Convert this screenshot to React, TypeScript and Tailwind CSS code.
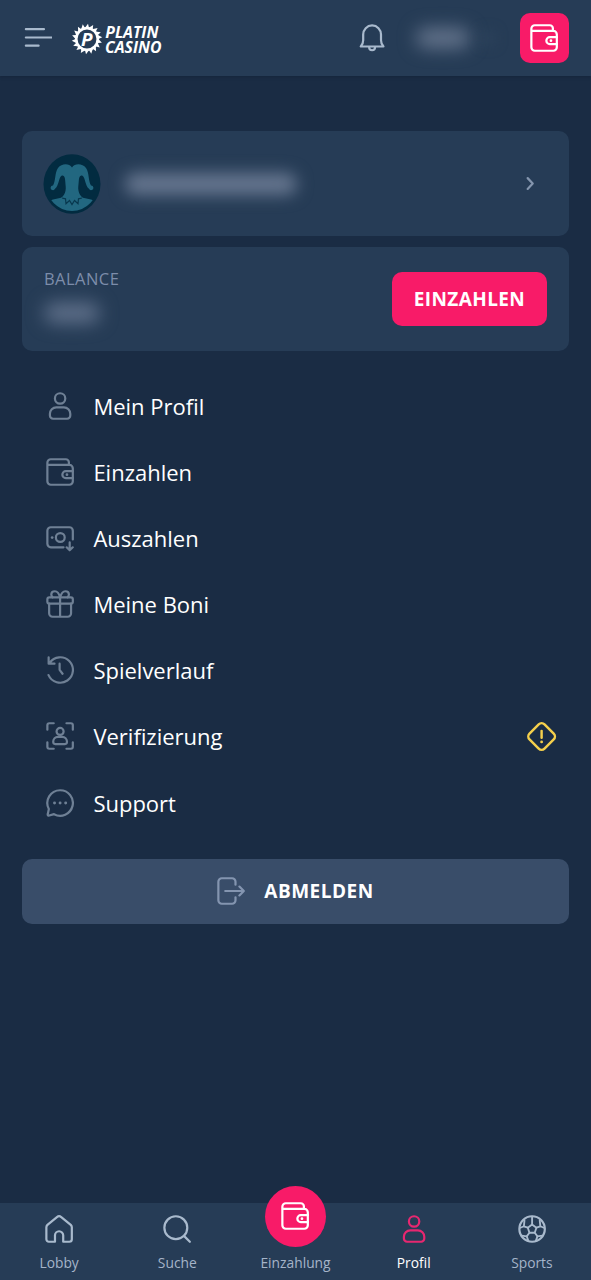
import type { ReactNode } from 'react';
import clsx from 'clsx';

type IconProps = { className?: string };

// Shared wrapper, all icons are drawn on the same 28px grid
function Icon({ className, children }: { className?: string; children: ReactNode }) {
  return (
    <svg
      viewBox="-0.4 -0.3 28.6 28.6"
      fill="none"
      stroke="currentColor"
      strokeWidth="2.25"
      strokeLinecap="round"
      strokeLinejoin="round"
      className={clsx('shrink-0', className)}
    >
      {children}
    </svg>
  );
}

const MenuIcon = ({ className }: IconProps) => (
  <Icon className={className}>
    <path d="M1.5 5H20M1.5 13.5h26M1.5 21.800h13" />
  </Icon>
);

const BellIcon = ({ className }: IconProps) => (
  <Icon className={className}>
    <path d="M2.4 22.7h23.2c-1.6-1.8-2.5-3.6-2.5-6.5v-5.7C23.1 5.4 19.2 1.2 14 1.2S4.900 5.4 4.900 10.5v5.7c0 2.900-.9 4.7-2.500 6.5Z" />
    <path d="M11 23.5a3 3 0 0 0 6 0" />
  </Icon>
);

const WalletIcon = ({ className }: IconProps) => (
  <Icon className={className}>
    <path d="M1 6.8h22.5a3.5 3.5 0 0 1 3.5 3.5v13.2a3.5 3.5 0 0 1-3.5 3.5h-19A3.5 3.5 0 0 1 1 23.5v-19A3.5 3.5 0 0 1 4.5 1h15.300a3.200 3.200 0 0 1 3.200 3.200v2.600" />
    <path d="M27 13.200h-7.200a3.500 3.500 0 0 0 0 7H27" />
    <circle cx="21" cy="16.7" r="1.4" fill="currentColor" stroke="none" />
  </Icon>
);

const UserIcon = ({ className }: IconProps) => (
  <Icon className={className}>
    <circle cx="14" cy="6.3" r="5.3" />
    <path d="M3.6 22a6.5 6.5 0 0 1 6.5-6.5h7.8a6.5 6.5 0 0 1 6.5 6.5v1.8a3.2 3.2 0 0 1-3.2 3.2H6.8a3.2 3.2 0 0 1-3.2-3.2Z" />
  </Icon>
);

const WithdrawIcon = ({ className }: IconProps) => (
  <Icon className={className}>
    <path d="M17.5 23.5h-13A3.5 3.5 0 0 1 1 20V6.5A3.5 3.5 0 0 1 4.5 3h19A3.5 3.5 0 0 1 27 6.5v9M23.8 18.5v8M20.7 23.5l3.1 3 3.1-3" />
    <circle cx="14.2" cy="13.5" r="4.5" />
    <circle cx="5.9" cy="13.5" r="1.4" fill="currentColor" stroke="none" />
  </Icon>
);

const GiftIcon = ({ className }: IconProps) => (
  <Icon className={className}>
    <rect x="1" y="7.2" width="26" height="6.5" rx="2" />
    <path d="M2.8 13.7v9.8A3.5 3.5 0 0 0 6.3 27h15.4a3.5 3.5 0 0 0 3.5-3.5v-9.8M14 7.2V27" />
    <path d="M14 7.2C12.8 3 11 1 8.7 1 6.5 1 5 2.4 5 4.4c0 1.2.5 2.1 1.4 2.8M14 7.2C15.2 3 17 1 19.3 1 21.5 1 23 2.4 23 4.4c0 1.2-.5 2.1-1.4 2.8" />
  </Icon>
);

const HistoryIcon = ({ className }: IconProps) => (
  <Icon className={className}>
    <path d="M2.2 19.2A13 13 0 1 0 3.4 6.6M2.3 1.2v6.3h6M13.5 7.5v6.3l3 4" />
  </Icon>
);

const VerifyIcon = ({ className }: IconProps) => (
  <Icon className={className}>
    <path d="M1 7.5V3a2 2 0 0 1 2-2h4.5M20.5 1H25a2 2 0 0 1 2 2v4.5M27 20.5V25a2 2 0 0 1-2 2h-4.5M7.5 27H3a2 2 0 0 1-2-2v-4.5" />
    <circle cx="14" cy="9.3" r="3.6" />
    <path d="M7 19.7a4.8 4.8 0 0 1 4.8-4.8h4.4a4.8 4.8 0 0 1 4.8 4.8v.5a2 2 0 0 1-2 2H9a2 2 0 0 1-2-2Z" />
  </Icon>
);

const SupportIcon = ({ className }: IconProps) => (
  <Icon className={className}>
    <path d="M14 1a13 13 0 1 1-6.2 24.4l-4.9 1.4c-1 .3-1.8-.3-1.5-1.4l1.1-5.3A13 13 0 0 1 14 1Z" />
    <g fill="currentColor" stroke="none">
      <circle cx="8.3" cy="14" r="1.5" />
      <circle cx="14" cy="14" r="1.5" />
      <circle cx="19.7" cy="14" r="1.5" />
    </g>
  </Icon>
);

const LogoutIcon = ({ className }: IconProps) => (
  <Icon className={className}>
    <path d="M18.5 7.5v-3A3.5 3.5 0 0 0 15 1H4.5A3.5 3.5 0 0 0 1 4.5v19A3.5 3.5 0 0 0 4.5 27H15a3.5 3.5 0 0 0 3.5-3.5v-3M8 14h19M22.5 9.5 27 14l-4.5 4.5" />
  </Icon>
);

const WarningIcon = ({ className }: IconProps) => (
  <Icon className={className}>
    <rect x="4.2" y="4.2" width="19.6" height="19.6" rx="3.8" transform="rotate(45 14 14)" />
    <path d="M14 8.8v6.3" />
    <circle cx="14" cy="19" r="1.3" fill="currentColor" stroke="none" />
  </Icon>
);

const HomeIcon = ({ className }: IconProps) => (
  <Icon className={className}>
    <path d="M18.2 27v-6.5a4.2 4.2 0 0 0-8.4 0V27H3.5A2.5 2.5 0 0 1 1 24.5V12.3c0-1 .4-1.8 1.1-2.5l9.7-8a3.5 3.5 0 0 1 4.4 0l9.7 8c.7.7 1.1 1.5 1.1 2.5v12.2a2.5 2.5 0 0 1-2.5 2.5Z" />
  </Icon>
);

const SearchIcon = ({ className }: IconProps) => (
  <Icon className={className}>
    <circle cx="12.7" cy="12.7" r="11.7" />
    <path d="m21 21 6 6" />
  </Icon>
);

const SportsIcon = ({ className }: IconProps) => (
  <Icon className={className}>
    <circle cx="14" cy="14" r="13" />
    <g strokeWidth="1.9">
      <path d="m14 9.5 4.4 3.2-1.7 5.1h-5.4l-1.7-5.1Z" />
      <path d="M14 9.5v-8M18.4 12.7l4-1.5M16.7 17.8l2.8 3.7M11.3 17.8l-2.8 3.7M9.6 12.7l-4-1.5" />
      <path d="M22.4 11.2 26.5 13M22.4 11.2l-.6-6M5.6 11.2 1.5 13M5.6 11.2l.6-6M19.5 21.5l-1.7 4.6M19.5 21.5l5-.7M8.5 21.5l1.7 4.6M8.5 21.5l-5-.7" />
    </g>
  </Icon>
);

// 18 teeth around the gear ring
const teeth = Array.from({ length: 18 }, (_, i) => i * 20);

function Logo() {
  return (
    <svg viewBox="0 0 92 42" className="h-[42px] w-[92px] text-white" fill="currentColor">
      <circle cx="16" cy="22" r="10.7" fill="none" stroke="currentColor" strokeWidth="2.5" />
      {teeth.map((deg) => (
        <path key={deg} d="M13.6 11.2 17 6.7l1.100 4.5Z" transform={`rotate(${deg} 16 22)`} />
      ))}
      <text x="10" y="28.5" fontFamily="Open Sans, sans-serif" fontWeight="700" fontStyle="italic" fontSize="18" textLength="11.5" lengthAdjust="spacingAndGlyphs">P</text>
      <g fontFamily="Open Sans, sans-serif" fontWeight="700" fontStyle="italic" fontSize="16">
        <text x="34.3" y="20.5" textLength="53" lengthAdjust="spacingAndGlyphs">PLATIN</text>
        <text x="34" y="36.3" textLength="56.5" lengthAdjust="spacingAndGlyphs">CASINO</text>
      </g>
    </svg>
  );
}

function Avatar() {
  return (
    <svg viewBox="0 0 58 60" className="h-[60px] w-[58px] shrink-0">
      <defs>
        <clipPath id="avatar-clip">
          <ellipse cx="29" cy="30" rx="26" ry="27" />
        </clipPath>
      </defs>
      <ellipse cx="29" cy="30" rx="28.5" ry="29.7" fill="#022b40" />
      <g fill="#226780" clipPath="url(#avatar-clip)">
        <path d="M29 13.5C26 9 18.5 9.5 15 14c-3.5 5-2 12.5-5 17.5a2.3 2.3 0 1 0 2 3.2c4-3 3.5-11 6.5-13 2.5-1.2 3.5 1.5 3.7 5 .2 4 1 7 .3 10-.6 3-1.5 4.5-4.5 7.3h22c-3-2.8-3.9-4.3-4.5-7.3-.7-3 .1-6 .3-10 .2-3.5 1.2-6.2 3.7-5 3 2 2.5 10 6.500 13a2.3 2.3 0 1 0 2-3.2c-3-5-1.5-12.5-5-17.500C39.5 9.5 32 9 29 13.5Z" />
        <path d="m3 48 7-2.5 8-1.7h22l8 1.7 7 2.5v12H3Z" />
      </g>
      <path d="m19 44 3.5.8.5 5 3.5-3.3 2.500 4 2.500-4 3.500 3.3.5-5L39 44" fill="none" stroke="#08384e" strokeWidth="1.2" />
    </svg>
  );
}

const menuItems = [
  { label: 'Mein Profil', icon: UserIcon },
  { label: 'Einzahlen', icon: WalletIcon },
  { label: 'Auszahlen', icon: WithdrawIcon },
  { label: 'Meine Boni', icon: GiftIcon },
  { label: 'Spielverlauf', icon: HistoryIcon },
  { label: 'Verifizierung', icon: VerifyIcon, warning: true },
  { label: 'Support', icon: SupportIcon },
];

const tabs = [
  { label: 'Lobby', icon: HomeIcon },
  { label: 'Suche', icon: SearchIcon },
  { label: 'Einzahlung', icon: WalletIcon, featured: true },
  { label: 'Profil', icon: UserIcon, active: true },
  { label: 'Sports', icon: SportsIcon },
];

function Header() {
  return (
    <header className="flex h-[76px] shrink-0 items-center bg-[#263c56] pr-[22px] pl-6 shadow-[0_1px_3px_rgba(15,28,48,0.4)]">
      <button aria-label="Menu">
        <MenuIcon className="size-7 text-[#a9bacd]" />
      </button>
      <div className="ml-[19px]">
        <Logo />
      </div>
      <div className="ml-auto flex items-center">
        <button aria-label="Notifications">
          <BellIcon className="size-7 text-[#a9bacd]" />
        </button>
        <div className="ml-[30px] flex w-[104px] items-center gap-3">
          <div className="h-5 w-[54px] rounded-full bg-[#64748c] blur-[9px]" />
          <div className="h-3 w-3 rounded-full bg-[#31475f] blur-[7px]" />
        </div>
        <button aria-label="Einzahlen" className="flex h-[50px] w-[49px] items-center justify-center rounded-[10px] bg-[#f81b68] pr-px text-white">
          <WalletIcon className="size-7" />
        </button>
      </div>
    </header>
  );
}

function BottomNav() {
  return (
    <nav className="grid h-[77px] shrink-0 grid-cols-5 bg-[#263c56]">
      {tabs.map(({ label, icon: TabIcon, featured, active }) => (
        <button key={label} className="flex flex-col items-center">
          {featured ? (
            <span className="-mt-[17px] flex size-[61px] items-center justify-center rounded-full bg-[#f81b68] pb-[2px] text-white">
              <TabIcon className="size-7" />
            </span>
          ) : (
            <TabIcon className={clsx('mt-3 size-7', active ? 'text-[#e72770]' : 'text-[#a9bacd]')} />
          )}
          <span className={clsx('text-[13.8px] leading-5', featured ? 'mt-1.5' : 'mt-[10px]', active ? 'text-white' : 'text-[#a5b4c9]')}>
            {label}
          </span>
        </button>
      ))}
    </nav>
  );
}

export default function App() {
  return (
    <div className="flex h-[1280px] w-[591px] flex-col overflow-hidden bg-[#1a2c44] font-['Open_Sans',sans-serif] select-none">
      <Header />

      <main className="flex-1 px-[22px] pt-[55.4px]">
        <button className="flex h-[104.4px] w-full items-center rounded-[10px] bg-[#263c56] pr-[25px] pl-[21px]">
          <Avatar />
          <div className="ml-6 h-[22px] w-[172px] rounded-full bg-[#66768f] blur-[8px]" />
          <Icon className="ml-auto size-7 text-[#8495ad]">
            <path d="m11.5 8 5.2 5.5-5.2 5.5" />
          </Icon>
        </button>

        <section className="mt-[11.2px] flex h-[104px] items-center justify-between rounded-[10px] bg-[#263c56] px-[22px]">
          <div className="flex flex-col gap-3 pb-2">
            <span className="text-[16.5px] leading-6 tracking-[0.45px] text-[#7d8daa]">BALANCE</span>
            <div className="h-5 w-[56px] rounded-full bg-[#60718b] blur-[9px]" />
          </div>
          <button className="h-[54.5px] w-[155px] rounded-[10px] bg-[#f81b68] text-[19px] font-bold tracking-[0.4px] text-white">EINZAHLEN</button>
        </section>

        <ul className="mt-[22.2px]">
          {menuItems.map(({ label, icon: ItemIcon, warning }) => (
            <li key={label} className="flex h-[66px] items-center pr-3 pl-[24.4px] last:pt-[2px]">
              <ItemIcon className="size-7 text-[#6f8095]" />
              <span className="ml-[19px] text-[22px] text-white">{label}</span>
              {warning && <WarningIcon className="ml-auto size-[31px] text-[#f5d04c]" />}
            </li>
          ))}
        </ul>

        <button className="mt-[23.5px] flex h-[65.6px] w-full items-center justify-center gap-[19px] rounded-[10px] bg-[#394d69] text-[19px] font-bold tracking-[0.5px] text-white">
          <LogoutIcon className="size-7 text-[#8495b0]" />
          ABMELDEN
        </button>
      </main>

      <BottomNav />
    </div>
  );
}
